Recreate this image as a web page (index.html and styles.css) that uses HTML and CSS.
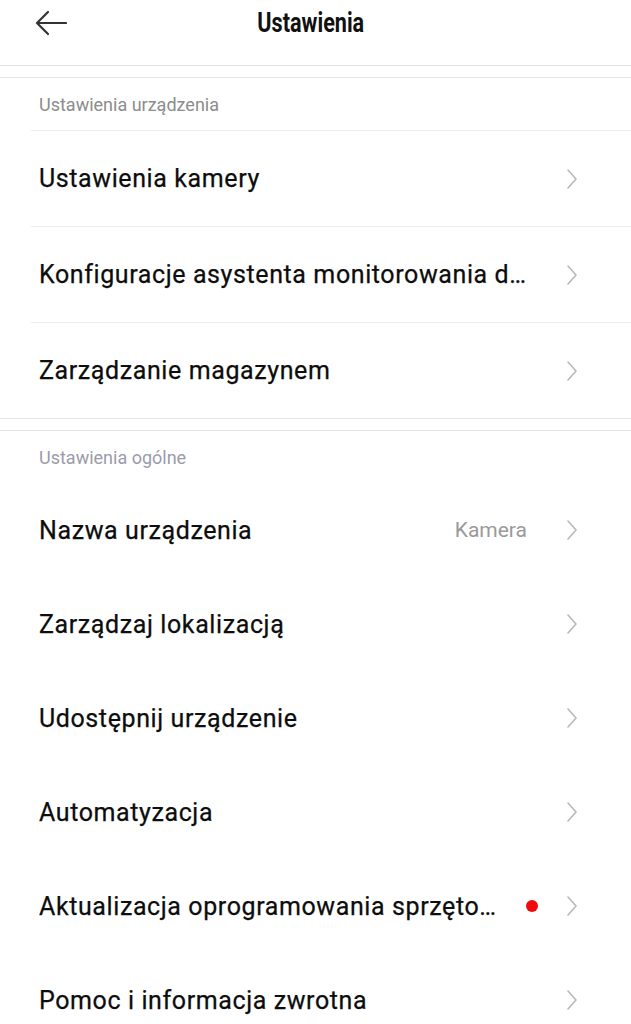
FILE: index.html
```html
<!DOCTYPE html>
<html lang="pl">
<head>
<meta charset="utf-8">
<link rel="stylesheet" href="styles.css">
</head>
<body>
<div class="page">
  <header class="topbar">
    <span class="back">
      <svg width="32" height="26" viewBox="0 0 32 26"><path d="M2 13 H31 M13 2 L2 13 L13 24" fill="none" stroke="#333" stroke-width="2.2" stroke-linecap="round" stroke-linejoin="round"/></svg>
    </span>
    <h1 class="title"><span>Ustawienia</span></h1>
  </header>

  <section class="group">
    <div class="group-title">Ustawienia urządzenia</div>
    <div class="row divided"><span class="label">Ustawienia kamery</span><span class="chev"></span></div>
    <div class="row divided"><span class="label">Konfiguracje asystenta monitorowania domu</span><span class="chev"></span></div>
    <div class="row divided"><span class="label">Zarządzanie magazynem</span><span class="chev"></span></div>
  </section>

  <section class="group second">
    <div class="group-title muted">Ustawienia ogólne</div>
    <div class="row"><span class="label">Nazwa urządzenia</span><span class="value">Kamera</span><span class="chev"></span></div>
    <div class="row"><span class="label">Zarządzaj lokalizacją</span><span class="chev"></span></div>
    <div class="row"><span class="label">Udostępnij urządzenie</span><span class="chev"></span></div>
    <div class="row"><span class="label">Automatyzacja</span><span class="chev"></span></div>
    <div class="row"><span class="label short">Aktualizacja oprogramowania sprzętowego</span><span class="dot"></span><span class="chev"></span></div>
    <div class="row"><span class="label">Pomoc i informacja zwrotna</span><span class="chev"></span></div>
  </section>
</div>
</body>
</html>
```

FILE: styles.css
```css
* { box-sizing: border-box; }
html, body { margin: 0; padding: 0; background: #fff; }
body { font-family: Roboto, "Noto Sans", sans-serif; color: #151515; overflow: hidden; }
.page { width: 631px; }

.topbar {
  height: 66px;
  border-bottom: 1px solid #e4e4e4;
  display: flex;
  align-items: center;
  justify-content: center;
  position: relative;
  margin-bottom: 11px;
}
.back { position: absolute; left: 35px; top: 10px; width: 32px; height: 26px; }
.back svg { display: block; }
.title {
  margin: 0 0 20px 0;
  font-size: 27px;
  font-weight: 700;
  color: #111;
  line-height: 30px;
  padding-right: 10px;
}
.title span { display: inline-block; transform: scaleX(0.8); }

.group { border-top: 1px solid #e6e6e6; border-bottom: 1px solid #e6e6e6; }
.group.second { margin-top: 11px; border-bottom: none; }
.group-title {
  height: 52px;
  padding-left: 39px;
  display: flex;
  align-items: center;
  font-size: 18px;
  color: #8c8c8c;
}
.group-title.muted { color: #9b9bab; }

.row {
  height: 94px;
  margin-left: 31px;
  padding: 0 54px 0 8px;
  display: flex;
  align-items: center;
}
.row.divided { height: 96px; border-top: 1px solid #ececec; }
.label {
  flex: 1;
  min-width: 0;
  font-size: 25px;
  font-weight: 400;
  letter-spacing: 0.6px;
  color: #0d0d0d;
  -webkit-text-stroke: 0.25px #0d0d0d;
  white-space: nowrap;
  overflow: hidden;
  text-overflow: ellipsis;
  padding-right: 40px;
}
.label.short { flex: 0 1 auto; max-width: 464px; margin-right: auto; padding-right: 0; }
.value { font-size: 21px; color: #9a9a9a; margin-right: 40px; }
.dot { width: 12px; height: 12px; border-radius: 50%; background: #f20a0a; margin-right: 29px; flex-shrink: 0; }
.chev {
  width: 10px; height: 20px; flex-shrink: 0;
  background: no-repeat center / 10px 20px url("data:image/svg+xml;utf8,<svg xmlns='http://www.w3.org/2000/svg' width='10' height='20' viewBox='0 0 10 20'><path d='M1 1 L9 10 L1 19' fill='none' stroke='%23b8b8b8' stroke-width='1.6' stroke-linecap='round' stroke-linejoin='round'/></svg>");
}
```
